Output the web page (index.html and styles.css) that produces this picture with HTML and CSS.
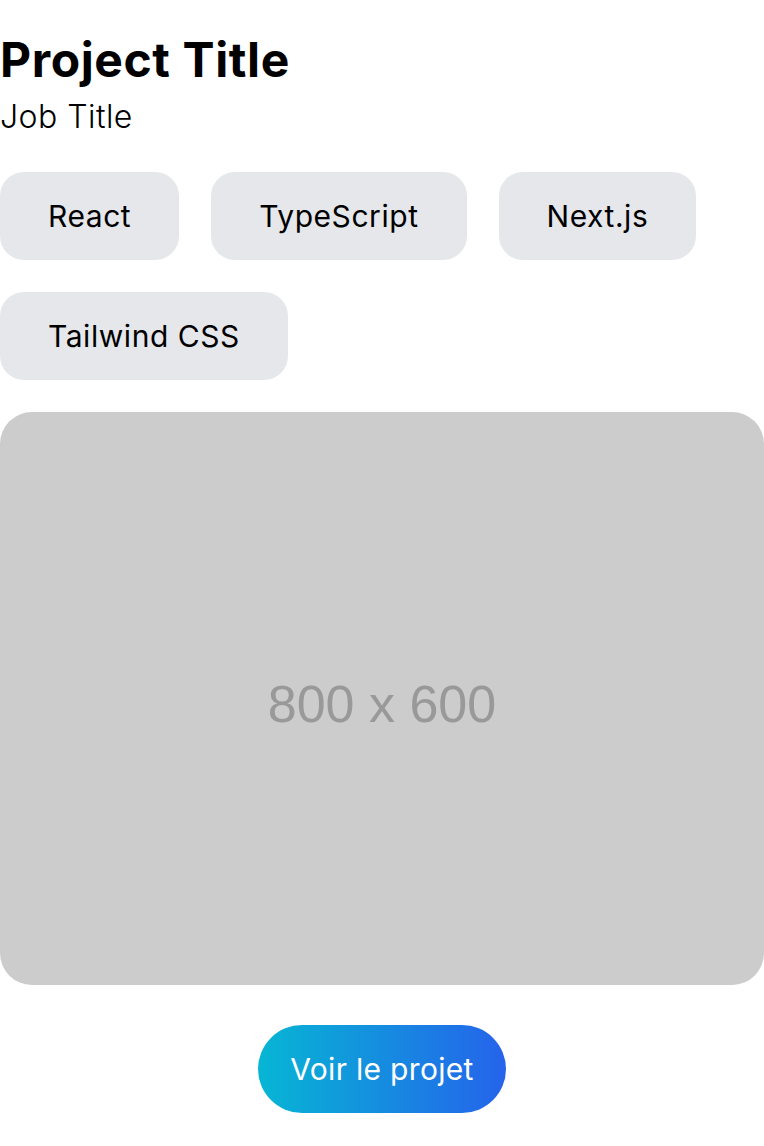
FILE: index.html
```html
<!DOCTYPE html>
<html lang="fr">
<head>
<meta charset="utf-8">
<title>Project</title>
<link rel="stylesheet" href="styles.css">
</head>
<body>
<main class="card">
  <h1 class="title">Project Title</h1>
  <p class="job">Job Title</p>
  <ul class="tags">
    <li class="tag">React</li>
    <li class="tag">TypeScript</li>
    <li class="tag">Next.js</li>
    <li class="tag">Tailwind CSS</li>
  </ul>
  <div class="image"><span class="image-label">800 x 600</span></div>
  <div class="actions">
    <a class="btn" href="#">Voir le projet</a>
  </div>
</main>
</body>
</html>
```
FILE: styles.css
```css
* { box-sizing: border-box; }
html, body { margin: 0; padding: 0; background: #fff; }
body {
  font-family: Inter, "Noto Sans", sans-serif;
  color: #000;
}
.card {
  padding-top: 31px;
}
.title {
  margin: 0;
  font-size: 48px;
  font-weight: 700;
  line-height: 57.6px;
  letter-spacing: 0.6px;
}
.job {
  margin: 4px 0 0;
  font-size: 32px;
  font-weight: 300;
  line-height: 48px;
  letter-spacing: 0.45px;
}
.tags {
  list-style: none;
  margin: 31px 0 0;
  padding: 0;
  display: flex;
  flex-wrap: wrap;
  gap: 32px;
}
.tag {
  background: #e5e7eb;
  border-radius: 24px;
  padding: 24px 48px;
  font-size: 30px;
  line-height: 40px;
  letter-spacing: 0.55px;
}
.image {
  margin-top: 32px;
  width: 100%;
  aspect-ratio: 4 / 3;
  background: #cccccc;
  border-radius: 32px;
  display: flex;
  align-items: center;
  justify-content: center;
}
.image-label {
  font-family: "Liberation Sans", Arial, sans-serif;
  font-size: 52px;
  color: #999999;
  padding-top: 12px;
}
.actions {
  margin-top: 40px;
  display: flex;
  justify-content: center;
}
.btn {
  display: inline-block;
  padding: 24px 32px;
  border-radius: 9999px;
  background: linear-gradient(to right, #06b6d4, #2563eb);
  color: #fff;
  text-decoration: none;
  font-size: 30px;
  line-height: 40px;
  letter-spacing: 0.3px;
}
```
